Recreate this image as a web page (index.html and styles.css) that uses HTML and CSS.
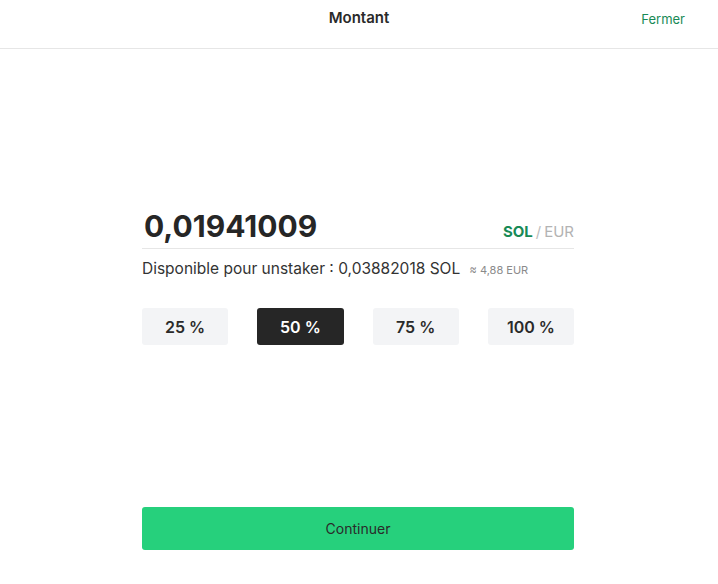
FILE: index.html
```html
<!DOCTYPE html>
<html lang="fr">
<head>
<meta charset="utf-8">
<title>Montant</title>
<link rel="stylesheet" href="styles.css">
</head>
<body>
<div class="page">
  <header class="header">
    <div class="title">Montant</div>
    <a class="close" href="#">Fermer</a>
  </header>
  <main class="main">
    <div class="panel">
      <div class="amount-row">
        <div class="amount">0,01941009</div>
        <div class="units"><span class="unit-active">SOL</span><span class="sep">/</span><span class="unit">EUR</span></div>
      </div>
      <div class="available">
        <span>Disponible pour unstaker : 0,03882018 SOL</span>
        <span class="approx">≈ 4,88 EUR</span>
      </div>
      <div class="percents">
        <button class="pct">25 %</button>
        <button class="pct pct-active">50 %</button>
        <button class="pct">75 %</button>
        <button class="pct">100 %</button>
      </div>
    </div>
  </main>
  <footer class="footer">
    <button class="continue">Continuer</button>
  </footer>
</div>
</body>
</html>
```

FILE: styles.css
```css
* { box-sizing: border-box; }
html, body { margin: 0; padding: 0; background: #fff; }
body { font-family: Inter, "Noto Sans", sans-serif; color: #262626; }
.page { height: 584px; display: flex; flex-direction: column; }
.header {
  height: 49px;
  border-bottom: 1px solid #e6e6e6;
  display: flex;
  align-items: flex-start;
  justify-content: center;
  position: relative;
}
.title { font-size: 15px; font-weight: 600; line-height: 20px; margin-top: 8px; color: #2a2a2a; }
.close {
  position: absolute; right: 33px; top: 9px;
  font-size: 13px; line-height: 20px; color: #188a56; text-decoration: none;
}
.main { flex: 1; display: flex; justify-content: center; padding-top: 159px; padding-right: 2px; }
.panel { width: 432px; }
.amount-row {
  display: flex; justify-content: space-between; align-items: baseline;
  border-bottom: 1px solid #e6e6e6; padding: 0 0 4px 2px;
}
.amount { font-size: 30px; font-weight: 700; line-height: 36px; color: #262626; }
.units { font-size: 15px; line-height: 20px; }
.unit-active { color: #188a56; font-weight: 700; }
.sep { color: #bdbdbd; margin: 0 3px; }
.unit { color: #b3b3b3; }
.available { margin-top: 10px; font-size: 15.5px; line-height: 20px; color: #333; }
.approx { font-size: 11px; color: #8a8a8a; margin-left: 5px; }
.percents {
  margin-top: 28px;
  display: grid; grid-template-columns: repeat(4, 1fr); gap: 29px;
}
.pct {
  height: 37px; border: none; border-radius: 3px; background: #f3f4f6;
  font-family: inherit; font-size: 16px; font-weight: 600; color: #2a2a2a;
  cursor: pointer;
}
.pct-active { background: #262626; color: #fff; }
.footer { display: flex; justify-content: center; padding-bottom: 34px; padding-right: 2px; }
.continue {
  width: 432px; height: 43px; border: none; border-radius: 3px;
  background: #26d07c; color: #2a2a2a; font-family: inherit; font-size: 14px; cursor: pointer;
}
```
